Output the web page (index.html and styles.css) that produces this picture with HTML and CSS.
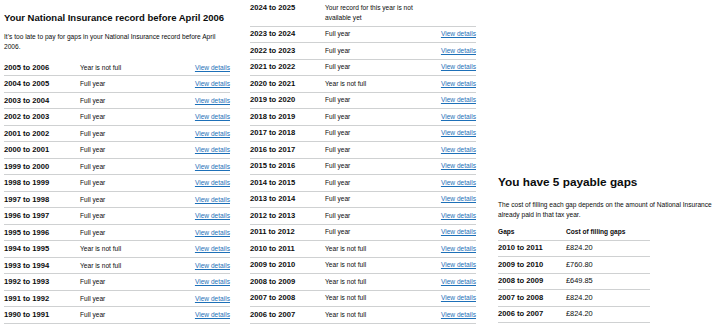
FILE: index.html
```html
<!DOCTYPE html>
<html lang="en">
<head>
    <meta charset="UTF-8">
    <meta name="viewport" content="width=device-width, initial-scale=1.0">
    <title>National Insurance record</title>
    <link rel="stylesheet" href="styles.css">
</head>
<body>
    <div class="page">
        <section class="column column-early">
            <h2 class="heading-m">Your National Insurance record before April 2006</h2>
            <p class="body-text">It’s too late to pay for gaps in your National Insurance record before April 2006.</p>
            <div class="record-list">
                <div class="record-row"><span class="record-key">2005 to 2006</span><span class="record-value">Year is not full</span><a href="#" class="record-link">View details</a></div>
                <div class="record-row"><span class="record-key">2004 to 2005</span><span class="record-value">Full year</span><a href="#" class="record-link">View details</a></div>
                <div class="record-row"><span class="record-key">2003 to 2004</span><span class="record-value">Full year</span><a href="#" class="record-link">View details</a></div>
                <div class="record-row"><span class="record-key">2002 to 2003</span><span class="record-value">Full year</span><a href="#" class="record-link">View details</a></div>
                <div class="record-row"><span class="record-key">2001 to 2002</span><span class="record-value">Full year</span><a href="#" class="record-link">View details</a></div>
                <div class="record-row"><span class="record-key">2000 to 2001</span><span class="record-value">Full year</span><a href="#" class="record-link">View details</a></div>
                <div class="record-row"><span class="record-key">1999 to 2000</span><span class="record-value">Full year</span><a href="#" class="record-link">View details</a></div>
                <div class="record-row"><span class="record-key">1998 to 1999</span><span class="record-value">Full year</span><a href="#" class="record-link">View details</a></div>
                <div class="record-row"><span class="record-key">1997 to 1998</span><span class="record-value">Full year</span><a href="#" class="record-link">View details</a></div>
                <div class="record-row"><span class="record-key">1996 to 1997</span><span class="record-value">Full year</span><a href="#" class="record-link">View details</a></div>
                <div class="record-row"><span class="record-key">1995 to 1996</span><span class="record-value">Full year</span><a href="#" class="record-link">View details</a></div>
                <div class="record-row"><span class="record-key">1994 to 1995</span><span class="record-value">Year is not full</span><a href="#" class="record-link">View details</a></div>
                <div class="record-row"><span class="record-key">1993 to 1994</span><span class="record-value">Year is not full</span><a href="#" class="record-link">View details</a></div>
                <div class="record-row"><span class="record-key">1992 to 1993</span><span class="record-value">Full year</span><a href="#" class="record-link">View details</a></div>
                <div class="record-row"><span class="record-key">1991 to 1992</span><span class="record-value">Full year</span><a href="#" class="record-link">View details</a></div>
                <div class="record-row"><span class="record-key">1990 to 1991</span><span class="record-value">Full year</span><a href="#" class="record-link">View details</a></div>
            </div>
        </section>

        <section class="column column-recent">
            <div class="record-list">
                <div class="record-row"><span class="record-key">2024 to 2025</span><span class="record-value record-value-wrap">Your record for this year is not available yet</span><span></span></div>
                <div class="record-row"><span class="record-key">2023 to 2024</span><span class="record-value">Full year</span><a href="#" class="record-link">View details</a></div>
                <div class="record-row"><span class="record-key">2022 to 2023</span><span class="record-value">Full year</span><a href="#" class="record-link">View details</a></div>
                <div class="record-row"><span class="record-key">2021 to 2022</span><span class="record-value">Full year</span><a href="#" class="record-link">View details</a></div>
                <div class="record-row"><span class="record-key">2020 to 2021</span><span class="record-value">Year is not full</span><a href="#" class="record-link">View details</a></div>
                <div class="record-row"><span class="record-key">2019 to 2020</span><span class="record-value">Full year</span><a href="#" class="record-link">View details</a></div>
                <div class="record-row"><span class="record-key">2018 to 2019</span><span class="record-value">Full year</span><a href="#" class="record-link">View details</a></div>
                <div class="record-row"><span class="record-key">2017 to 2018</span><span class="record-value">Full year</span><a href="#" class="record-link">View details</a></div>
                <div class="record-row"><span class="record-key">2016 to 2017</span><span class="record-value">Full year</span><a href="#" class="record-link">View details</a></div>
                <div class="record-row"><span class="record-key">2015 to 2016</span><span class="record-value">Full year</span><a href="#" class="record-link">View details</a></div>
                <div class="record-row"><span class="record-key">2014 to 2015</span><span class="record-value">Full year</span><a href="#" class="record-link">View details</a></div>
                <div class="record-row"><span class="record-key">2013 to 2014</span><span class="record-value">Full year</span><a href="#" class="record-link">View details</a></div>
                <div class="record-row"><span class="record-key">2012 to 2013</span><span class="record-value">Full year</span><a href="#" class="record-link">View details</a></div>
                <div class="record-row"><span class="record-key">2011 to 2012</span><span class="record-value">Full year</span><a href="#" class="record-link">View details</a></div>
                <div class="record-row"><span class="record-key">2010 to 2011</span><span class="record-value">Year is not full</span><a href="#" class="record-link">View details</a></div>
                <div class="record-row"><span class="record-key">2009 to 2010</span><span class="record-value">Year is not full</span><a href="#" class="record-link">View details</a></div>
                <div class="record-row"><span class="record-key">2008 to 2009</span><span class="record-value">Year is not full</span><a href="#" class="record-link">View details</a></div>
                <div class="record-row"><span class="record-key">2007 to 2008</span><span class="record-value">Year is not full</span><a href="#" class="record-link">View details</a></div>
                <div class="record-row"><span class="record-key">2006 to 2007</span><span class="record-value">Year is not full</span><a href="#" class="record-link">View details</a></div>
            </div>
        </section>

        <section class="column column-gaps">
            <h2 class="heading-l">You have 5 payable gaps</h2>
            <p class="body-text">The cost of filling each gap depends on the amount of National Insurance already paid in that tax year.</p>
            <div class="gaps-table">
                <div class="gaps-row gaps-head"><span>Gaps</span><span>Cost of filling gaps</span></div>
                <div class="gaps-row"><span class="record-key">2010 to 2011</span><span class="gaps-cost">£824.20</span></div>
                <div class="gaps-row"><span class="record-key">2009 to 2010</span><span class="gaps-cost">£760.80</span></div>
                <div class="gaps-row"><span class="record-key">2008 to 2009</span><span class="gaps-cost">£649.85</span></div>
                <div class="gaps-row"><span class="record-key">2007 to 2008</span><span class="gaps-cost">£824.20</span></div>
                <div class="gaps-row"><span class="record-key">2006 to 2007</span><span class="gaps-cost">£824.20</span></div>
            </div>
        </section>
    </div>
</body>
</html>
```

FILE: styles.css
```css
* {
    margin: 0;
    padding: 0;
    box-sizing: border-box;
}

body {
    font-family: "Liberation Sans", Arial, sans-serif;
    background: #ffffff;
    color: #0b0c0c;
    overflow: hidden;
}

.page {
    display: flex;
    align-items: flex-start;
    gap: 20px;
    padding: 0 0 0 4px;
}

.column-early {
    width: 226px;
    padding-top: 12px;
}

.column-recent {
    width: 226px;
}

.column-gaps {
    width: 222px;
    margin-left: 2px;
    padding-top: 174px;
}

.heading-m {
    font-size: 9.5px;
    line-height: 12px;
    font-weight: 700;
}

.heading-l {
    font-size: 11.8px;
    line-height: 17px;
    font-weight: 700;
}

.body-text {
    font-size: 6.6px;
    line-height: 9.5px;
}

.column-early .body-text {
    margin-top: 8px;
    margin-bottom: 8.75px;
}

.column-gaps .body-text {
    margin-top: 9px;
    margin-bottom: 5px;
}

.record-row {
    display: grid;
    grid-template-columns: 76px 1fr auto;
    align-items: baseline;
    padding: 2.75px 0;
    border-bottom: 1px solid #cfd1d2;
    font-size: 6.6px;
    line-height: 10px;
}

.column-recent .record-row {
    grid-template-columns: 75px 1fr auto;
}

.record-key {
    font-size: 7.6px;
    font-weight: 700;
}

.record-value-wrap {
    max-width: 95px;
}

.record-link {
    color: #1d70b8;
    text-decoration: underline;
    text-decoration-thickness: 0.5px;
    text-underline-offset: 1px;
}

.gaps-table {
    width: 152px;
}

.gaps-row {
    display: grid;
    grid-template-columns: 68px 1fr;
    align-items: baseline;
    padding: 2.75px 0;
    border-bottom: 1px solid #cfd1d2;
    font-size: 6.6px;
    line-height: 10px;
}

.gaps-head {
    font-weight: 700;
}

.gaps-cost {
    font-size: 7.4px;
}
```
